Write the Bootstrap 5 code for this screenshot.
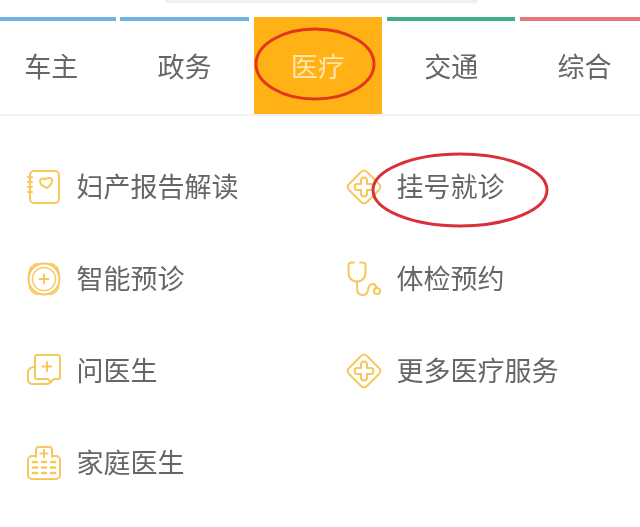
<!DOCTYPE html>
<html lang="zh"><head><meta charset="utf-8">
<link href="https://cdn.jsdelivr.net/npm/bootstrap@5.3.0/dist/css/bootstrap.min.css" rel="stylesheet">
<style>
html,body{width:640px;height:527px;overflow:hidden;background:#fff}
body{font-family:"Noto Sans CJK SC","Liberation Sans",sans-serif;color:#666}
.stage{position:relative;width:640px;height:527px;overflow:hidden;filter:blur(.5px)}
.topsliver{width:313px;height:3px;margin-left:165px;margin-bottom:14px;background:#f0eeee;border-radius:0 0 3px 3px}
.tabbar{margin-left:-13px;width:668px;height:99px;gap:4.8px;border-bottom:2px solid #f1f1f1}
.tabcell{flex:0 0 128.5px;height:97px;border-top:4px solid #888;font-size:27px;padding-bottom:2px;color:#666}
.tc-blue{border-top-color:#6fb2e6}
.tc-green{border-top-color:#3fae8c}
.tc-red{border-top-color:#ea7376}
.tc-on{background:#ffb115;border-top-color:#ffb115;color:#ffe6a8}
.menugrid{padding-top:25px}
.entry{height:92px;padding-left:26px;font-size:27px;line-height:1;color:#666}
.entry span{margin-left:-.5px;padding-bottom:4px}
.entry svg{flex:0 0 36px;width:36px;height:36px;margin-right:15px;fill:none;stroke:#f7c75c;stroke-width:2;stroke-linecap:round;stroke-linejoin:round}
.ring{position:absolute;pointer-events:none}
.ring ellipse{fill:none;stroke-width:3}
</style></head>
<body>
<div class="stage">
  <div class="topsliver"></div>
  <div class="d-flex tabbar">
    <div class="tabcell tc-blue d-flex align-items-center justify-content-center"><span>车主</span></div>
    <div class="tabcell tc-blue d-flex align-items-center justify-content-center"><span>政务</span></div>
    <div class="tabcell tc-on d-flex align-items-center justify-content-center"><span>医疗</span></div>
    <div class="tabcell tc-green d-flex align-items-center justify-content-center"><span>交通</span></div>
    <div class="tabcell tc-red d-flex align-items-center justify-content-center"><span>综合</span></div>
  </div>
  <div class="row g-0 menugrid">
    <div class="col-6"><div class="entry d-flex align-items-center">
      <svg viewBox="0 0 36 36"><rect x="4" y="2" width="29" height="32" rx="4"/><path d="M2 8h4M2 13h4M2 18h4M2 23h4"/><path d="M21 19c-4-1.500-7-4-7-7 0-2.500 3-3.500 5-1.500 1-1.500 6-2.500 7 0 .6 2-1 6-5 8.500z"/></svg>
      <span>妇产报告解读</span></div></div>
    <div class="col-6"><div class="entry d-flex align-items-center">
      <svg viewBox="0 0 36 36"><path d="M18 1.500 C20 1.500 21 3 23 5L31 13C33 15 34.500 16 34.500 18S33 21 31 23L23 31C21 33 20 34.500 18 34.500S15 33 13 31L5 23C3 21 1.500 20 1.500 18S3 15 5 13L13 5C15 3 16 1.500 18 1.500Z"/><path d="M15 11.500a3 3 0 0 1 6 0V15h3.500a3 3 0 0 1 0 6H21v3.500a3 3 0 0 1-6 0V21h-3.500a3 3 0 0 1 0-6H15z"/></svg>
      <span>挂号就诊</span></div></div>
    <div class="col-6"><div class="entry d-flex align-items-center">
      <svg viewBox="0 0 36 36"><path d="M3 12C4 6 7 3 12 2.500M24 2.500C29 3 32 6 33 12M33 24C32 30 29 33 24 33.500M12 33.500C7 33 4 30 3 24" stroke-width="1.500"/><circle cx="18" cy="18" r="15.500"/><circle cx="18" cy="18" r="11.500" stroke-width="1.400"/><path d="M18 13.500v9M13.500 18h9"/></svg>
      <span>智能预诊</span></div></div>
    <div class="col-6"><div class="entry d-flex align-items-center">
      <svg viewBox="0 0 36 36"><path d="M8 1.500H5.500c-2 0-3 1-3 3v7c0 6 4 9 8.500 9s8.500-3 8.500-9v-7c0-2-1-3-3-3H14"/><path d="M11 21v6c0 5 2.500 7 5.500 7s5-2 5.500-5c.4-3 1.500-6 4.500-6 2.500 0 3.500 1.500 4 3.500"/><circle cx="31" cy="30" r="3"/></svg>
      <span>体检预约</span></div></div>
    <div class="col-6"><div class="entry d-flex align-items-center">
      <svg viewBox="0 0 36 36"><path d="M11 2h21a2 2 0 0 1 2 2v20a2 2 0 0 1-2 2h-4l-3 3-3-3H11a2 2 0 0 1-2-2V4a2 2 0 0 1 2-2z"/><path d="M9 14c-4 0-7 2-7 6v6c0 3 2 5 5 5h13c2 0 4-1 5-2"/><path d="M21 9v9M16.500 13.500h9"/></svg>
      <span>问医生</span></div></div>
    <div class="col-6"><div class="entry d-flex align-items-center">
      <svg viewBox="0 0 36 36"><path d="M18 1.500 C20 1.500 21 3 23 5L31 13C33 15 34.500 16 34.500 18S33 21 31 23L23 31C21 33 20 34.500 18 34.500S15 33 13 31L5 23C3 21 1.500 20 1.500 18S3 15 5 13L13 5C15 3 16 1.500 18 1.500Z"/><path d="M15 11.500a3 3 0 0 1 6 0V15h3.500a3 3 0 0 1 0 6H21v3.500a3 3 0 0 1-6 0V21h-3.500a3 3 0 0 1 0-6H15z"/></svg>
      <span>更多医疗服务</span></div></div>
    <div class="col-6"><div class="entry d-flex align-items-center">
      <svg viewBox="0 0 36 36"><path d="M10 12V5a3 3 0 0 1 3-3h10a3 3 0 0 1 3 3v7"/><path d="M10 11H6a4 4 0 0 0-4 4v15a4 4 0 0 0 4 4h24a4 4 0 0 0 4-4V15a4 4 0 0 0-4-4h-4"/><path d="M18 5v7M14.500 8.500h7"/><path d="M7 17h4M16 17h4M25 17h4M7 22.500h4M16 22.500h4M25 22.500h4M7 28h4M16 28h4M25 28h4" stroke-width="2.400"/></svg>
      <span>家庭医生</span></div></div>
  </div>
  <svg class="ring" style="left:253px;top:26px" width="124" height="76" viewBox="0 0 124 76"><ellipse cx="62" cy="38" rx="59" ry="35" stroke="#e2381a"/></svg>
  <svg class="ring" style="left:370px;top:151px" width="180" height="78" viewBox="0 0 180 78"><ellipse cx="90" cy="39" rx="87" ry="36" stroke="#d9303a"/></svg>
</div>
<script src="https://cdn.jsdelivr.net/npm/bootstrap@5.3.0/dist/js/bootstrap.bundle.min.js"></script>
</body></html>
